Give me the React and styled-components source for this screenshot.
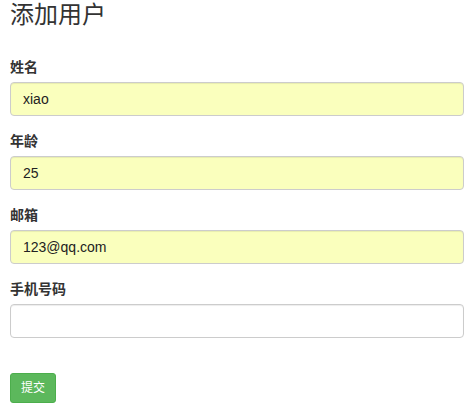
import React from 'react';
import styled, { createGlobalStyle } from 'styled-components';

const GlobalStyle = createGlobalStyle`
  body {
    margin: 0;
    background: #fff;
    font-family: "Liberation Sans", Arial, "Noto Sans CJK SC", sans-serif;
    font-size: 14px;
    line-height: 1.42857;
    color: #333;
  }
`;

const Container = styled.div`
  padding: 0 8px 0 10px;
`;

const Title = styled.h3`
  margin: 2px 0 29px;
  font-size: 24px;
  font-weight: 400;
  line-height: 1.1;
  color: #333;
`;

const FormGroup = styled.div`
  margin-bottom: 15px;
`;

const Label = styled.label`
  display: block;
  margin-bottom: 5px;
  font-weight: 700;
  line-height: 20px;
`;

const Input = styled.input`
  display: block;
  box-sizing: border-box;
  width: 100%;
  height: 34px;
  padding: 6px 12px;
  font-family: inherit;
  font-size: 14px;
  color: #222;
  background: ${p => (p.$filled ? '#faffbd' : '#fff')};
  border: 1px solid #ccc;
  border-radius: 4px;
  box-shadow: inset 0 1px 1px rgba(0, 0, 0, 0.075);
  outline: none;
`;

const SubmitButton = styled.button`
  margin-top: 20px;
  padding: 5px 10px;
  font-family: inherit;
  font-size: 12px;
  line-height: 1.5;
  color: #fff;
  background: #5cb85c;
  border: 1px solid #4cae4c;
  border-radius: 3px;
  cursor: pointer;
`;

const fields = [
  { label: '姓名', value: 'xiao' },
  { label: '年龄', value: '25' },
  { label: '邮箱', value: '123@qq.com' },
  { label: '手机号码', value: '' }
];

export default function App() {
  return (
    <Container>
      <GlobalStyle />
      <Title>添加用户</Title>
      {fields.map(f => (
        <FormGroup key={f.label}>
          <Label>{f.label}</Label>
          <Input defaultValue={f.value} $filled={!!f.value} />
        </FormGroup>
      ))}
      <SubmitButton>提交</SubmitButton>
    </Container>
  );
}
